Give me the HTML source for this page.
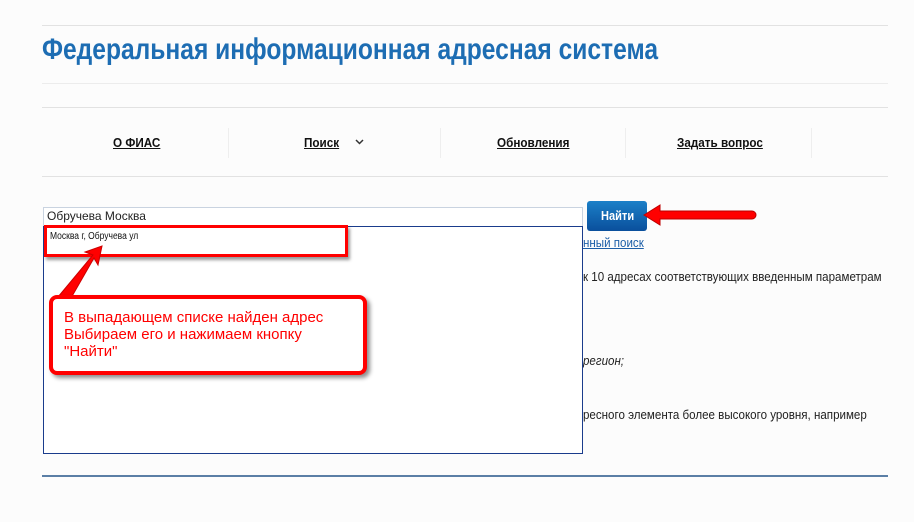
<!DOCTYPE html>
<html><head><meta charset="utf-8"><style>
body{margin:0;width:914px;height:522px;background:#fcfcfc;position:relative;overflow:hidden;font-family:"Liberation Sans","DejaVu Sans",sans-serif}
.a{position:absolute}
.hl{position:absolute;left:42px;width:846px;height:1px;background:#e2e2e2}
.n{position:absolute;top:135px;font-size:13px;font-weight:bold;text-decoration:underline;color:#111;transform:scaleX(.9);transform-origin:left top;white-space:nowrap}
.sep{position:absolute;top:128px;width:1px;height:30px;background:#eee}
.t{position:absolute;font-size:13px;color:#222;transform:scaleX(.89);transform-origin:left top;white-space:nowrap}
</style></head><body>
<div class="hl" style="top:25px"></div>
<div class="a" style="left:42px;top:33px;font-size:30px;font-weight:bold;color:#1d6db3;transform:scaleX(.82);transform-origin:left top;white-space:nowrap">Федеральная информационная адресная система</div>
<div class="hl" style="top:83px;background:#ececec"></div>
<div class="hl" style="top:107px"></div>
<div class="hl" style="top:176px"></div>
<div class="sep" style="left:228px"></div><div class="sep" style="left:440px"></div><div class="sep" style="left:625px"></div><div class="sep" style="left:811px"></div>
<div class="n" style="left:113px">О ФИАС</div>
<div class="n" style="left:304px">Поиск</div>
<svg class="a" style="left:355px;top:139px" width="9" height="6"><path d="M1 1l3.5 3.5L8 1" stroke="#333" stroke-width="1.5" fill="none"/></svg>
<div class="n" style="left:497px">Обновления</div>
<div class="n" style="left:677px">Задать вопрос</div>

<div class="t" style="left:583px;top:235px;color:#1d5fa8;text-decoration:underline">нный поиск</div>
<div class="t" style="left:583px;top:269px">к 10 адресах соответствующих введенным параметрам</div>
<div class="t" style="left:583px;top:353px;font-style:italic">регион;</div>
<div class="t" style="left:583px;top:407px">ресного элемента более высокого уровня, например</div>

<div class="a" style="left:43px;top:207px;width:538px;height:18px;border:1px solid #c9d3e0;background:#fff"></div>
<div class="a" style="left:47px;top:209px;font-size:12px;color:#222">Обручева Москва</div>
<div class="a" style="left:43px;top:226px;width:538px;height:226px;border:1px solid #1a3c8c;background:#fff"></div>
<div class="a" style="left:50px;top:231px;font-size:10px;color:#111;transform:scaleX(.85);transform-origin:left top">Москва г, Обручева ул</div>
<div class="a" style="left:44px;top:225px;width:298px;height:26px;border:3px solid #f00;box-shadow:2px 3px 3px rgba(0,0,0,.4)"></div>
<svg class="a" style="left:40px;top:235px" width="80" height="80"><path d="M18 62L53 20l-8-3 17-6-4 19-4-7L27 70z" fill="#f00" stroke="#c00" stroke-width="1"/></svg>
<div class="a" style="left:49px;top:295px;width:310px;height:72px;border:4px solid #f00;border-radius:8px;background:#fff;box-shadow:3px 3px 4px rgba(0,0,0,.45)"></div>
<div class="a" style="left:64px;top:309px;font-size:15px;line-height:17px;color:#f00">В выпадающем списке найден адрес<br>Выбираем его и нажимаем кнопку<br>"Найти"</div>

<div class="a" style="left:587px;top:201px;width:60px;height:30px;border-radius:3px;background:linear-gradient(#1b80c8,#0a4f9c)"></div>
<div class="a" style="left:601px;top:208px;font-size:13px;font-weight:bold;color:#fff;transform:scaleX(.85);transform-origin:left top">Найти</div>
<svg class="a" style="left:640px;top:200px" width="120" height="30"><path d="M4 15L20 5v6h92a4 4 0 010 8H20v6z" fill="#f00" stroke="#b00" stroke-width="1"/></svg>

<div class="a" style="left:42px;top:475px;width:846px;height:2px;background:#5b7fa6"></div>
</body></html>
